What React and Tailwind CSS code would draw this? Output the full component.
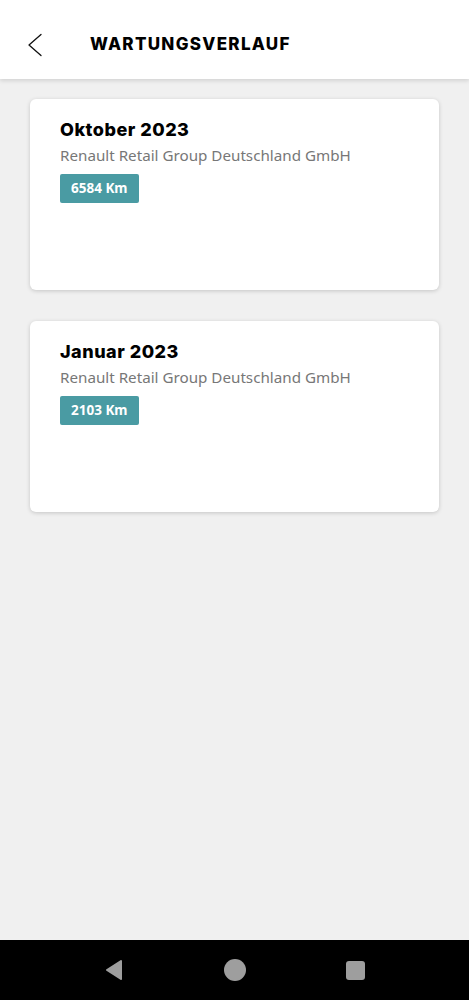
const entries = [
  { month: 'Oktober 2023', dealer: 'Renault Retail Group Deutschland GmbH', km: '6584 Km' },
  { month: 'Januar 2023', dealer: 'Renault Retail Group Deutschland GmbH', km: '2103 Km' },
]

export default function App() {
  return (
    <div className="h-screen flex flex-col bg-[#f0f0f0]" style={{ fontFamily: '"Noto Sans", sans-serif' }}>
      {/* Kopfzeile */}
      <header className="h-[79px] shrink-0 bg-white flex items-center pt-[10px] shadow-[0_2px_4px_rgba(0,0,0,0.12)] relative z-10">
        <button className="ml-[27px] text-black">
          <svg width="16" height="24" viewBox="0 0 16 24" fill="none">
            <path d="M14 1.5 L2 12 L14 22.5" stroke="#111" strokeWidth="1.3" strokeLinecap="round" strokeLinejoin="round" />
          </svg>
        </button>
        <h1 className="ml-[47px] text-[17px] font-extrabold tracking-[1.3px] text-black" style={{ fontFamily: 'Inter, sans-serif' }}>
          WARTUNGSVERLAUF
        </h1>
      </header>

      {/* Liste */}
      <main className="flex-1 px-[30px] pt-[20px] flex flex-col gap-[31px]">
        {entries.map((e) => (
          <div key={e.month} className="h-[191px] bg-white rounded-[6px] shadow-[0_1px_4px_rgba(0,0,0,0.18)] px-[30px] pt-[20px]">
            <h2 className="text-[18px] font-extrabold tracking-[0.5px] text-black leading-[22px]" style={{ fontFamily: 'Inter, sans-serif' }}>{e.month}</h2>
            <p className="text-[15.2px] text-[#777] mt-[3px] leading-[22px]">{e.dealer}</p>
            <span className="inline-block mt-[8px] bg-[#4a9ba3] text-white text-[13.5px] font-bold rounded-[2px] px-[11px] h-[29px] leading-[29px]">
              {e.km}
            </span>
          </div>
        ))}
      </main>

      {/* Navigationsleiste */}
      <nav className="h-[60px] shrink-0 bg-black flex items-center justify-center">
        <div className="flex items-center gap-[100px]">
          <svg width="20" height="22" viewBox="0 0 20 22">
            <path d="M17 2 L3 11 L17 20 Z" fill="#9e9e9e" stroke="#9e9e9e" strokeWidth="2" strokeLinejoin="round" />
          </svg>
          <div className="w-[22px] h-[22px] rounded-full bg-[#9e9e9e]" />
          <div className="w-[19px] h-[19px] rounded-[3px] bg-[#9e9e9e]" />
        </div>
      </nav>
    </div>
  )
}
